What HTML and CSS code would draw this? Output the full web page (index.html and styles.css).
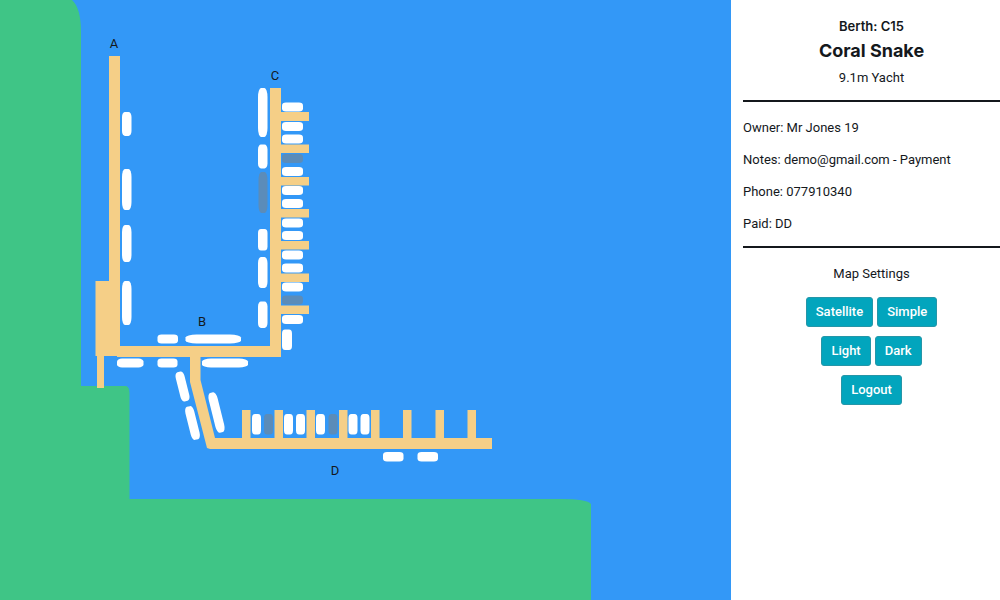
FILE: index.html
```html
<!DOCTYPE html>
<html lang="en">
<head>
<meta charset="utf-8">
<title>Marina berths</title>
<link rel="stylesheet" href="styles.css">
</head>
<body>
<div class="app">
  <main class="map">
    <svg class="chart" viewBox="0 0 731 600" preserveAspectRatio="xMinYMin meet" role="img" aria-label="Marina map">
      <g class="land">
        <path d="M0 0H72Q81 8 81 32V386H126Q129.500 387 129.500 393V499H561Q587 499 591 504V600H0Z"/>
      </g>
      <g class="pier">
        <path d="M109 56H120V346H270V88H281V357H200.500V380L215 438H492V449H210L207 448L190 382V357H117V356H104V388H97V356H95.500V281H109Z"/>
        <path d="M281 112h28v9h-28zM281 144.500h28v8.500h-28zM281 177h28v8.500h-28zM281 209h28v8.500h-28zM281 241h28v8.500h-28zM281 273.500h28v8.500h-28zM281 305.500h28v8.500h-28z"/>
        <path d="M242 410h8.500v29h-8.500zM274.500 410h8.500v29h-8.500zM306.500 410h8.500v29h-8.500zM339 410h8.500v29h-8.500zM371 410h8.500v29h-8.500zM403 410h8.500v29h-8.500zM435.500 410h8.500v29h-8.500zM467.500 410h8.500v29h-8.500z"/>
      </g>
      <g class="boat">
        <rect x="122" y="112" width="9.500" height="24" rx="3" ry="5"/>
        <rect x="122" y="169" width="9.500" height="41" rx="3" ry="8"/>
        <rect x="122" y="225" width="9.500" height="37" rx="3" ry="7"/>
        <rect x="122" y="281" width="9.500" height="44" rx="3" ry="8"/>

        <rect x="157.500" y="334.500" width="20.500" height="9" rx="4" ry="3"/>
        <rect x="185.500" y="334.500" width="55.500" height="9" rx="11" ry="3"/>
        <rect x="117" y="358.500" width="26.500" height="9" rx="5" ry="3"/>
        <rect x="157.500" y="358.500" width="20" height="9" rx="4" ry="3"/>
        <rect x="202" y="358.500" width="46" height="9" rx="9" ry="3"/>
        <rect x="178" y="371.500" width="9" height="30" rx="3" ry="5" transform="rotate(-14 182.500 386.500)"/>
        <rect x="188" y="406" width="9" height="34" rx="3" ry="6" transform="rotate(-14 192.500 423)"/>
        <rect x="212" y="392" width="9" height="41" rx="3" ry="7" transform="rotate(-14 216.500 412.500)"/>

        <rect x="258" y="88" width="9.500" height="49" rx="3" ry="9"/>
        <rect x="258" y="144.500" width="9.500" height="24" rx="3" ry="5"/>
        <rect class="away" x="258.500" y="172" width="9" height="41" rx="3" ry="8"/>
        <rect x="258" y="229" width="9.500" height="21.500" rx="3" ry="4"/>
        <rect x="258" y="257" width="9.500" height="31" rx="3" ry="6"/>
        <rect x="258" y="301.500" width="9.500" height="26.500" rx="3" ry="5"/>

        <rect x="282" y="102.500" width="21" height="9" rx="4" ry="3"/>
        <rect x="282" y="122" width="21" height="9" rx="4" ry="3"/>
        <rect x="282" y="134.500" width="21" height="9" rx="4" ry="3"/>
        <rect class="away" x="282" y="154" width="21" height="9" rx="4" ry="3"/>
        <rect x="282" y="167" width="21" height="9" rx="4" ry="3"/>
        <rect x="282" y="186" width="21" height="9" rx="4" ry="3"/>
        <rect x="282" y="199" width="21" height="9" rx="4" ry="3"/>
        <rect x="282" y="218.500" width="21" height="9" rx="4" ry="3"/>
        <rect x="282" y="231" width="21" height="9" rx="4" ry="3"/>
        <rect x="282" y="250.500" width="21" height="9" rx="4" ry="3"/>
        <rect x="282" y="263.500" width="21" height="9" rx="4" ry="3"/>
        <rect x="282" y="282.500" width="21" height="9" rx="4" ry="3"/>
        <rect class="away" x="282" y="295.500" width="21" height="9" rx="4" ry="3"/>
        <rect x="282" y="315" width="21" height="9" rx="4" ry="3"/>
        <rect x="282" y="329.500" width="10" height="20.500" rx="3" ry="4"/>

        <rect x="252" y="414" width="9" height="20.500" rx="3" ry="4"/>
        <rect class="away" x="264" y="414" width="9" height="20.500" rx="3" ry="4"/>
        <rect x="284" y="414" width="9" height="20.500" rx="3" ry="4"/>
        <rect x="296" y="414" width="9" height="20.500" rx="3" ry="4"/>
        <rect x="316" y="414" width="9" height="20.500" rx="3" ry="4"/>
        <rect class="away" x="328.500" y="414" width="9" height="20.500" rx="3" ry="4"/>
        <rect x="348.500" y="414" width="9" height="20.500" rx="3" ry="4"/>
        <rect x="360.500" y="414" width="9" height="20.500" rx="3" ry="4"/>
        <rect x="383" y="452" width="20.500" height="9.500" rx="4" ry="3"/>
        <rect x="417.500" y="452" width="20.500" height="9.500" rx="4" ry="3"/>
      </g>
      <g class="pier-name">
        <text x="114" y="48">A</text>
        <text x="202" y="326">B</text>
        <text x="275" y="80">C</text>
        <text x="335" y="475">D</text>
      </g>
    </svg>
  </main>
  <aside class="panel">
    <header class="berth">
      <h2 class="berth-code">Berth: C15</h2>
      <h1 class="boat-name">Coral Snake</h1>
      <p class="boat-type">9.1m Yacht</p>
    </header>
    <section class="details">
      <p>Owner: Mr Jones 19</p>
      <p>Notes: demo@gmail.com - Payment</p>
      <p>Phone: 077910340</p>
      <p>Paid: DD</p>
    </section>
    <section class="settings">
      <p class="settings-title">Map Settings</p>
      <div class="row"><button class="btn" type="button">Satellite</button><button class="btn" type="button">Simple</button></div>
      <div class="row"><button class="btn" type="button">Light</button><button class="btn" type="button">Dark</button></div>
      <div class="row"><button class="btn" type="button">Logout</button></div>
    </section>
  </aside>
</div>
</body>
</html>
```
FILE: styles.css
```css
* { box-sizing: border-box; }

body {
  margin: 0;
  background: #fff;
  color: #14181c;
  font-family: Roboto, "Liberation Sans", sans-serif;
  font-size: 13px;
  line-height: 20px;
}

h1, h2, p { margin: 0; }

.app {
  display: flex;
  min-height: 100vh;
}

.map {
  flex: 1;
  min-width: 0;
  background: #3398f7;
}

.chart {
  display: block;
  width: 100%;
}

.land { fill: #3fc586; }
.pier { fill: #f5cf87; }
.boat { fill: #fff; }
.away { fill: #5b8cb9; }

.pier-name {
  fill: #14181c;
  font-size: 13px;
  text-anchor: middle;
}

.panel {
  flex: 0 0 269px;
  padding: 16px 0 16px 12px;
}

.berth {
  padding-bottom: 12px;
  border-bottom: 2px solid #14181c;
  text-align: center;
}

.berth-code,
.boat-name {
  font-family: Inter, "Liberation Sans", sans-serif;
}

.berth-code {
  font-size: 13px;
  font-weight: 600;
}

.boat-name {
  font-size: 18px;
  font-weight: 700;
  line-height: 30px;
  margin-bottom: 2px;
}

.details {
  display: flex;
  flex-direction: column;
  gap: 12px;
  padding: 16px 0 12px;
  border-bottom: 2px solid #14181c;
}

.settings {
  display: flex;
  flex-direction: column;
  align-items: center;
  gap: 9px;
  padding-top: 16px;
}

.settings-title { margin-bottom: 4px; }

.row {
  display: flex;
  gap: 4px;
}

.btn {
  padding: 4px 9px;
  border: 1px solid #2596a8;
  border-radius: 3px;
  background: #02a5bd;
  color: #fff;
  font-family: inherit;
  font-size: 13px;
  font-weight: 500;
  line-height: 20px;
}
```
